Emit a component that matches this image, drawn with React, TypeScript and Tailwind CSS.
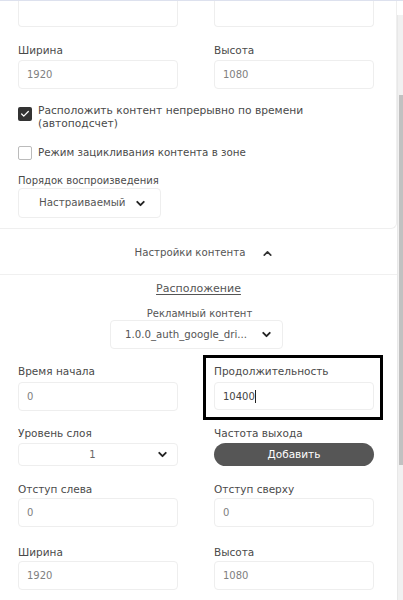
import { ChevronDown, ChevronUp, Check } from "lucide-react";

const box = "border border-[#eeeeee] rounded-[4px] bg-white";

function Field({ label, value, mt, gap }: { label: string; value: string; mt: string; gap: string }) {
  return (
    <div className={mt}>
      <div className="text-[10.5px] leading-[14px] text-[#4a4a4a]">{label}</div>
      <div className={`${gap} h-[29px] ${box} flex items-center pl-[8px] text-[10px] text-[#808080]`}>{value}</div>
    </div>
  );
}

export default function App() {
  return (
    <div className="w-[403px] h-[600px] overflow-hidden bg-white flex flex-col font-['DejaVu_Sans',sans-serif]">
      <div className="h-px bg-[#dde1ee] shrink-0" />
      <div className="flex flex-1">
        <div className="w-[397px]">
          {/* Zone settings card */}
          <div className="border-b border-r border-[#efefef] rounded-br-[6px] pb-[10px]">
            <div className="px-[18px] grid grid-cols-[160px_160px] gap-x-[36px]">
              <div className="h-[26px] border border-t-0 border-[#eeeeee] rounded-b-[4px]" />
              <div className="h-[26px] border border-t-0 border-[#eeeeee] rounded-b-[4px]" />
              <Field label="Ширина" value="1920" mt="mt-[16px]" gap="mt-[3px]" />
              <Field label="Высота" value="1080" mt="mt-[16px]" gap="mt-[3px]" />
            </div>
            <div className="px-[18px]">
              <div className="mt-[15px] flex items-start gap-[6px]">
                <div className="mt-[3px] w-[14px] h-[14px] rounded-[2px] bg-[#333] flex items-center justify-center shrink-0">
                  <Check size={10} strokeWidth={3} color="#fff" />
                </div>
                <div className="text-[10.7px] leading-[13px] text-[#4a4a4a]">
                  Расположить контент непрерывно по времени
                  <br />
                  (автоподсчет)
                </div>
              </div>
              <div className="mt-[15px] h-[16px] flex items-center gap-[6px]">
                <div className="w-[14px] h-[14px] rounded-[2px] border border-[#bbb] shrink-0" />
                <div className="text-[10.3px] text-[#4a4a4a]">Режим зацикливания контента в зоне</div>
              </div>
              <div className="mt-[13px] text-[10px] leading-[13px] text-[#4a4a4a]">Порядок воспроизведения</div>
              <div className={`mt-[1px] w-[143px] h-[30px] ${box} flex items-center pl-[20px] gap-[8px] text-[10.3px] text-[#555]`}>
                Настраиваемый
                <ChevronDown size={13} strokeWidth={3.5} color="#222" />
              </div>
            </div>
          </div>

          {/* Content settings header */}
          <div className="h-[46px] pt-[3px] border-b border-[#f0f0f0] flex items-center justify-center gap-[16px] text-[10.2px] text-[#555] pl-[12px]">
            Настройки контента
            <ChevronUp size={13} strokeWidth={3} color="#333" />
          </div>

          <div className="mt-[7px] text-center text-[11px] leading-[13px] text-[#555] underline underline-offset-2">
            Расположение
          </div>
          <div className="mt-[12px] text-center text-[10px] leading-[13px] text-[#555] pl-[2px]">Рекламный контент</div>
          <div className={`ml-[110px] w-[173px] h-[29px] ${box} flex items-center pl-[14px] gap-[13px] text-[10.2px] text-[#555]`}>
            1.0.0_auth_google_dri...
            <ChevronDown size={13} strokeWidth={3.5} color="#222" />
          </div>

          <div className="px-[18px] grid grid-cols-[160px_160px] gap-x-[36px]">
            <Field label="Время начала" value="0" mt="mt-[15px]" gap="mt-[4px]" />
            <div className="relative mt-[15px]">
              <div className="absolute -left-[11px] -right-[9px] -top-[9px] -bottom-[9px] border-[3px] border-black" />
              <div className="text-[10.5px] leading-[14px] text-[#4a4a4a]">Продолжительность</div>
              <div className={`mt-[4px] h-[28px] ${box} flex items-center pl-[8px] text-[10px] text-[#444]`}>
                10400<span className="w-px h-[13px] bg-[#222]" />
              </div>
            </div>

            <div className="mt-[15px]">
              <div className="text-[10.5px] leading-[14px] text-[#4a4a4a]">Уровень слоя</div>
              <div className={`mt-[3px] h-[23px] ${box} flex items-center text-[10px] text-[#666]`}>
                <span className="flex-1 text-center pl-[10px]">1</span>
                <ChevronDown size={13} strokeWidth={3.5} color="#222" className="mr-[8px]" />
              </div>
            </div>
            <div className="mt-[15px]">
              <div className="text-[10.5px] leading-[14px] text-[#4a4a4a]">Частота выхода</div>
              <div className="mt-[3px] h-[23px] rounded-full bg-[#565656] flex items-center justify-center text-[10.5px] text-white">
                Добавить
              </div>
            </div>

            <Field label="Отступ слева" value="0" mt="mt-[16px]" gap="mt-[2px]" />
            <Field label="Отступ сверху" value="0" mt="mt-[16px]" gap="mt-[2px]" />
            <Field label="Ширина" value="1920" mt="mt-[18px]" gap="mt-[2px]" />
            <Field label="Высота" value="1080" mt="mt-[18px]" gap="mt-[2px]" />
          </div>
        </div>

        {/* Scrollbar */}
        <div className="w-[6px] pt-[14px] flex flex-col">
          <div className="flex-1 bg-[#f1f1f1] border-l border-[#e8e8e8] pt-[80px]">
            <div className="ml-[1px] h-[370px] bg-[#c1c1c1]" />
          </div>
        </div>
      </div>
    </div>
  );
}
